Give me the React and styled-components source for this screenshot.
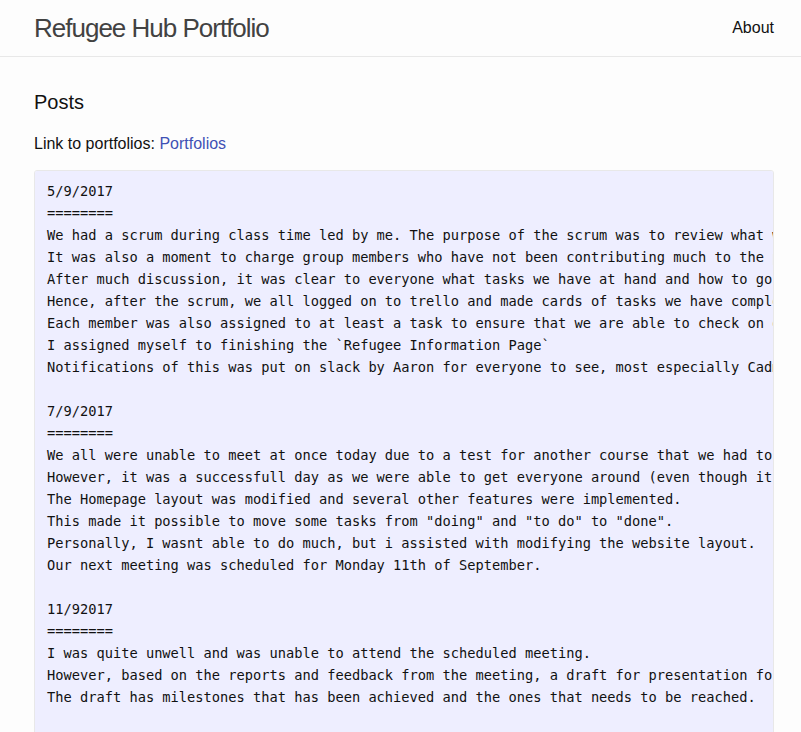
import React from "react";
import styled, { createGlobalStyle } from "styled-components";

const GlobalStyle = createGlobalStyle`
  html, body {
    margin: 0;
    padding: 0;
    overflow: hidden;
  }
  body {
    background: #fdfdfd;
    color: #111;
    font-family: "Liberation Sans", Arial, Helvetica, sans-serif;
    font-size: 16px;
    line-height: 1.5;
  }
  * { box-sizing: border-box; }
`;

const Header = styled.header`
  border-bottom: 1px solid #e8e8e8;
  min-height: 56px;
`;

const Wrapper = styled.div`
  width: 740px;
  margin-left: 34px;
`;

const HeaderInner = styled(Wrapper)`
  display: flex;
  justify-content: space-between;
  align-items: center;
`;

const SiteTitle = styled.a`
  font-size: 26px;
  font-weight: 300;
  line-height: 56px;
  letter-spacing: -1px;
  color: #424242;
  text-decoration: none;
`;

const Nav = styled.nav`
  display: flex;
  gap: 20px;
  line-height: 56px;
`;

const NavLink = styled.a`
  color: #111;
  text-decoration: none;
  line-height: 1.5;
`;

const Main = styled.main`
  padding: 30px 0;
`;

const Heading = styled.h2`
  font-size: 20px;
  font-weight: 400;
  line-height: 1.5;
  margin: 0 0 15px;
`;

const Para = styled.p`
  margin: 0 0 14px;
`;

const Link = styled.a`
  color: #3f51b5;
  text-decoration: none;
`;

const Pre = styled.pre`
  margin: 0 0 15px;
  padding: 9px 12px 7px;
  border: 1px solid #e8e8e8;
  border-radius: 3px;
  background-color: #eeeeff;
  font-family: "DejaVu Sans Mono", "Liberation Mono", monospace;
  font-size: 13.7px;
  line-height: 22px;
  color: #111;
  overflow-x: auto;
  white-space: pre;
`;

const log = `5/9/2017
========
We had a scrum during class time led by me. The purpose of the scrum was to review what we have done so far.
It was also a moment to charge group members who have not been contributing much to the project.
After much discussion, it was clear to everyone what tasks we have at hand and how to go about them.
Hence, after the scrum, we all logged on to trello and made cards of tasks we have completed and those yet to be done.
Each member was also assigned to at least a task to ensure that we are able to check on each other's progress.
I assigned myself to finishing the \`Refugee Information Page\`
Notifications of this was put on slack by Aaron for everyone to see, most especially Cadmus who was absent.

7/9/2017
========
We all were unable to meet at once today due to a test for another course that we had to write.
However, it was a successfull day as we were able to get everyone around (even though it was at different times).
The Homepage layout was modified and several other features were implemented.
This made it possible to move some tasks from "doing" and "to do" to "done".
Personally, I wasnt able to do much, but i assisted with modifying the website layout.
Our next meeting was scheduled for Monday 11th of September.

11/92017
========
I was quite unwell and was unable to attend the scheduled meeting.
However, based on the reports and feedback from the meeting, a draft for presentation for the project was made.
The draft has milestones that has been achieved and the ones that needs to be reached.

14/9/2017
========
We met after class to go through the draft presentation.`;

export default function App() {
  return (
    <>
      <GlobalStyle />
      <Header>
        <HeaderInner>
          <SiteTitle href="#">Refugee Hub Portfolio</SiteTitle>
          <Nav>
            <NavLink href="#">About</NavLink>
          </Nav>
        </HeaderInner>
      </Header>
      <Main>
        <Wrapper>
          <Heading>Posts</Heading>
          <Para>
            Link to portfolios: <Link href="#">Portfolios</Link>
          </Para>
          <Pre>{log}</Pre>
        </Wrapper>
      </Main>
    </>
  );
}
